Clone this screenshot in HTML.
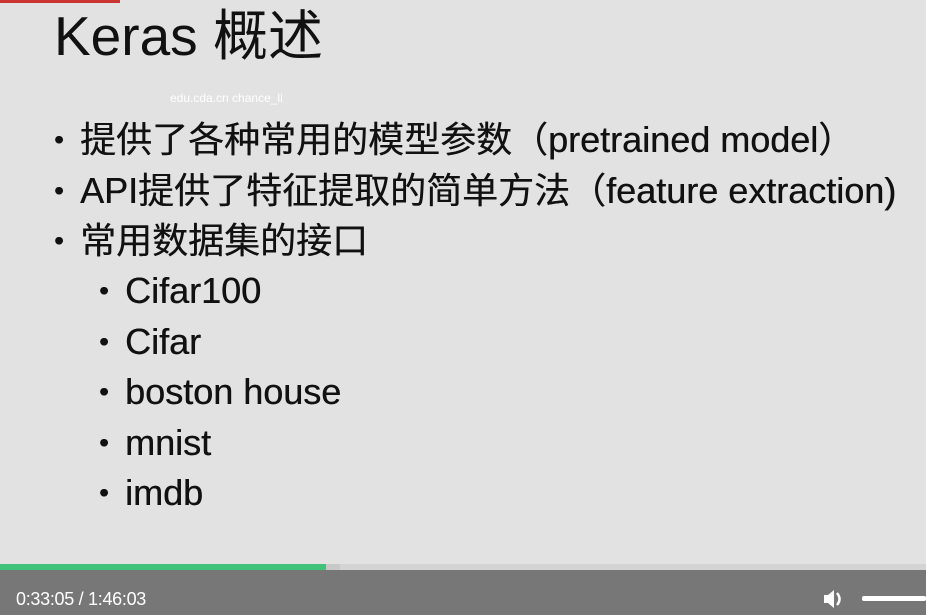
<!DOCTYPE html>
<html><head><meta charset="utf-8"><style>
body{margin:0;width:926px;height:615px;overflow:hidden;background:#e2e2e2;position:relative;font-family:"Liberation Sans","Noto Sans CJK SC",sans-serif;color:#111}
.t{position:absolute;white-space:nowrap}
.li{position:absolute;font-size:36px;white-space:nowrap;line-height:40px;text-shadow:0.4px 0 0 #111}
.li:before{content:"•";position:absolute;left:-26px;font-size:28px}
</style></head><body>
<div style="position:absolute;left:0;top:0;width:120px;height:3px;background:#c33"></div>
<div class="t" style="left:54px;top:4px;font-size:55px;line-height:64px">Keras 概述</div>
<div class="t" style="left:170px;top:91px;font-size:12px;color:#fff">edu.cda.cn chance_li</div>
<div class="li" style="left:80px;top:120px">提供了各种常用的模型参数（pretrained model）</div>
<div class="li" style="left:80px;top:171px">API提供了特征提取的简单方法（feature extraction)</div>
<div class="li" style="left:80px;top:221px">常用数据集的接口</div>
<div class="li" style="left:125px;top:271px">Cifar100</div>
<div class="li" style="left:125px;top:322px">Cifar</div>
<div class="li" style="left:125px;top:372px">boston house</div>
<div class="li" style="left:125px;top:423px">mnist</div>
<div class="li" style="left:125px;top:473px">imdb</div>
<div style="position:absolute;left:0;top:564px;width:926px;height:6px;background:#d4d4d4"></div>
<div style="position:absolute;left:0;top:564px;width:340px;height:6px;background:#c8c8c8"></div>
<div style="position:absolute;left:0;top:564px;width:326px;height:6px;background:#41c27a"></div>
<div style="position:absolute;left:0;top:570px;width:926px;height:45px;background:#777"></div>
<div class="t" style="left:16px;top:589px;font-size:18px;color:#fff;letter-spacing:-0.3px">0:33:05 / 1:46:03</div>
<svg style="position:absolute;left:822px;top:587px" width="24" height="24" viewBox="0 0 24 24"><path d="M2 8h4l6-5v18l-6-5H2z" fill="#fff"/><path d="M15 6q5 6 0 12" stroke="#fff" stroke-width="2.5" fill="none"/></svg>
<div style="position:absolute;left:862px;top:596px;width:64px;height:5px;background:#fff;border-radius:2px"></div>
</body></html>
